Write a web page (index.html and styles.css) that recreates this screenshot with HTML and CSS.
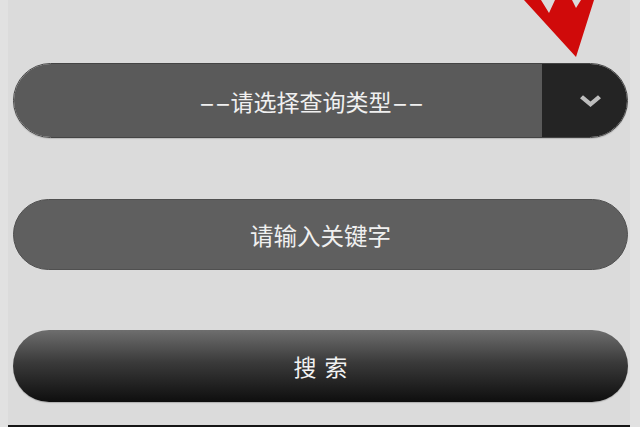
FILE: index.html
```html
<!DOCTYPE html>
<html lang="zh-CN">
<head>
<meta charset="utf-8">
<title>查询</title>
<link rel="stylesheet" href="styles.css">
</head>
<body>
<div class="page">
  <div class="form">
    <div class="select">
      <div class="select-main"><span class="dash">--</span>请选择查询类型<span class="dash">--</span></div>
      <div class="select-btn">
        <svg class="chev" viewBox="0 0 21 12" width="21" height="12"><polygon points="0,3.2 3,0.2 10.5,6.6 18,0.2 21,3.2 10.5,12" fill="#bdbdbd"/></svg>
      </div>
    </div>
    <div class="input">请输入关键字</div>
    <div class="search">搜索</div>
  </div>
  <svg class="arrow" viewBox="520 0 80 60" width="80" height="60"><polygon points="524,0 541,0 549,13 555,0 572,0 576,8 581,0 594,0 576,57" fill="#d00a0a"/></svg>
</div>
</body>
</html>
```
FILE: styles.css
```css
html, body {
  margin: 0;
  padding: 0;
  background: #e1e1e1;
}
.page {
  position: relative;
  width: 622px;
  height: 425px;
  margin-left: 8px;
  background: #dbdbdb;
  border-bottom: 2px solid #151515;
  font-family: "Noto Sans CJK SC", "Noto Sans", sans-serif;
  overflow: hidden;
}
.form {
  display: flex;
  flex-direction: column;
  padding: 63px 2px 0 5px;
}
.select {
  display: flex;
  height: 75px;
  border-radius: 38px;
  overflow: hidden;
  border: 1px solid #444;
  box-sizing: border-box;
  box-shadow: 0 1px 1px rgba(0,0,0,0.15);
}
.select-main {
  flex: 1;
  background: #5a5a5a;
  color: #f0f0f0;
  font-size: 23px;
  display: flex;
  align-items: center;
  justify-content: center;
  padding-left: 66px;
}
.dash {
  display: inline-block;
  transform: scaleX(2);
  margin: 0 8px;
}
.select-btn {
  width: 85px;
  background: #242424;
  display: flex;
  align-items: center;
  padding-left: 38px;
  box-sizing: border-box;
}
.input {
  margin-top: 61px;
  height: 71px;
  border-radius: 36px;
  background: #5f5f5f;
  border: 1px solid #505050;
  box-sizing: border-box;
  color: #f0f0f0;
  font-size: 23.5px;
  display: flex;
  align-items: center;
  justify-content: center;
}
.search {
  margin-top: 60px;
  height: 72px;
  border-radius: 36px;
  background: linear-gradient(#6e6e6e, #3a3a3a 45%, #0e0e0e);
  color: #f2f2f2;
  font-size: 23px;
  display: flex;
  align-items: center;
  justify-content: center;
  letter-spacing: 8px;
  padding-left: 8px;
  box-shadow: 0 1px 1px rgba(0,0,0,0.2);
}
.arrow {
  position: absolute;
  top: 0;
  left: 512px;
}
```
